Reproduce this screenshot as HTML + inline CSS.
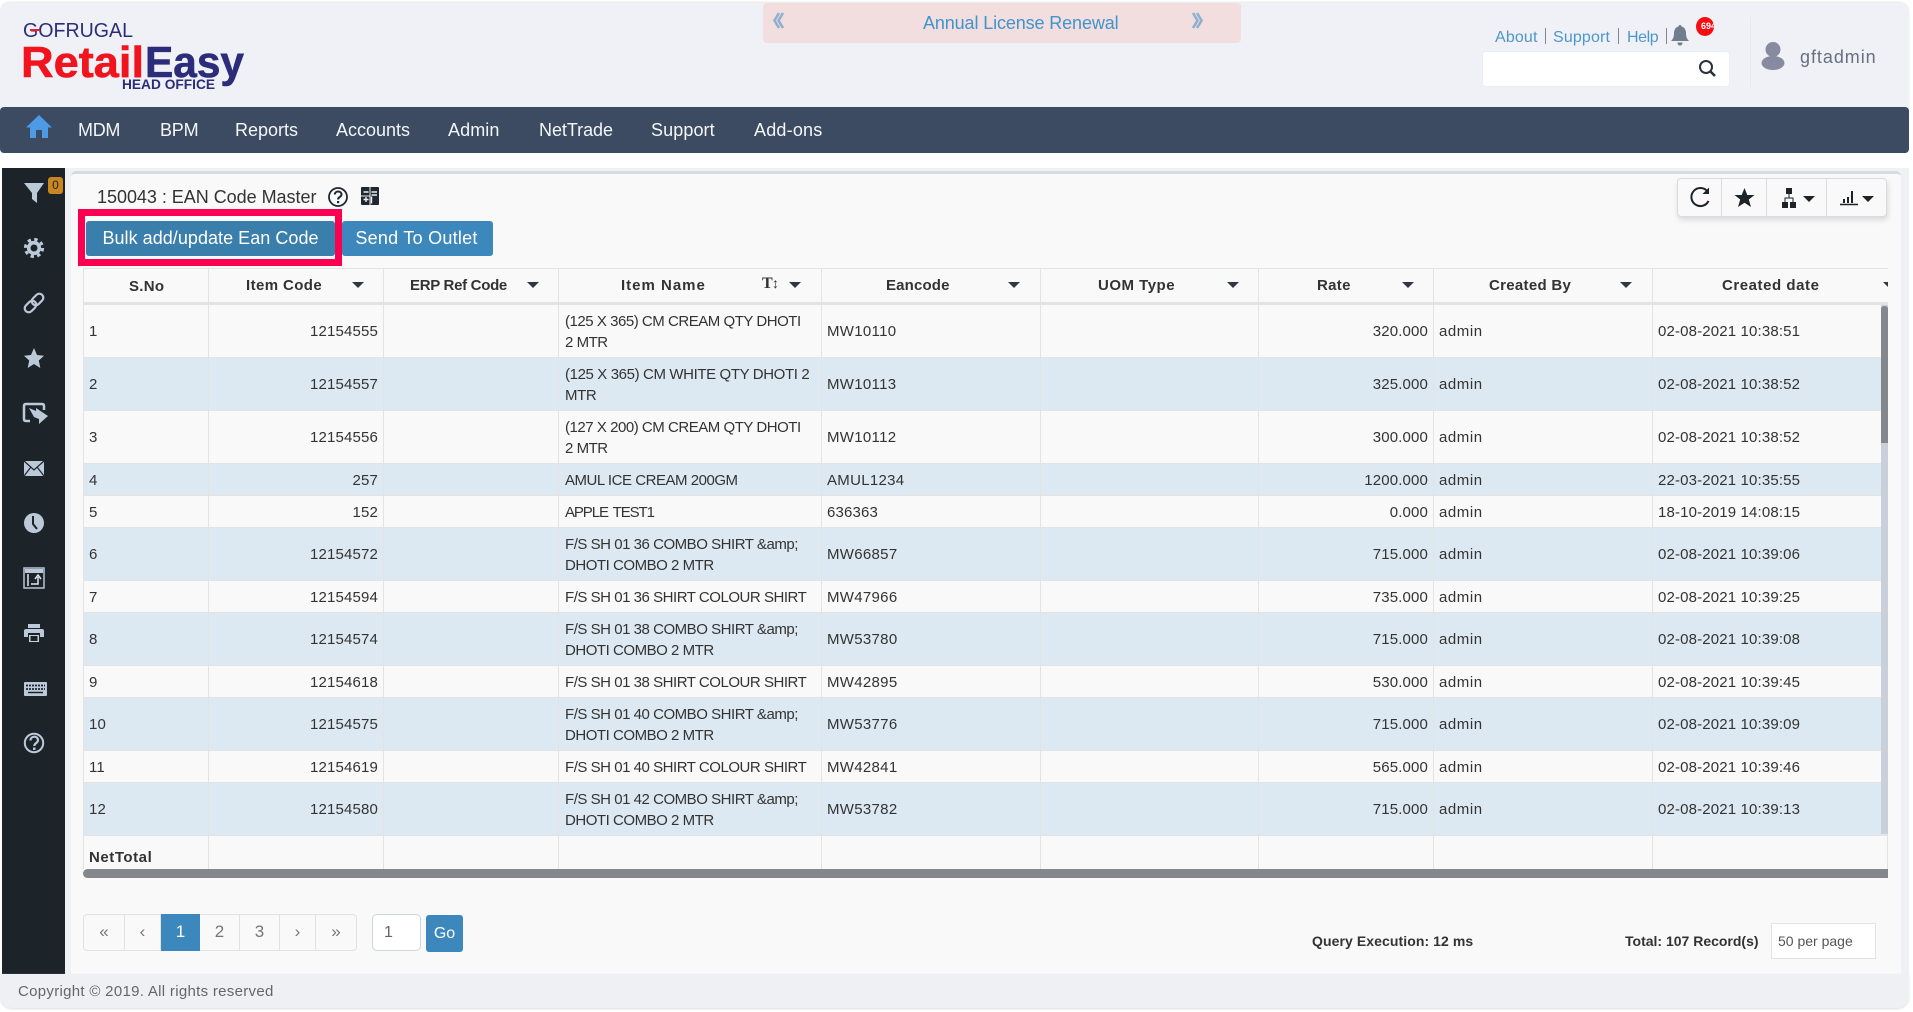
<!DOCTYPE html>
<html><head><meta charset="utf-8"><title>EAN Code Master</title>
<style>
*{box-sizing:border-box}
html,body{margin:0;padding:0;background:#fff;width:1913px;height:1012px;overflow:hidden;font-family:"Liberation Sans",Arial,sans-serif;color:#333}
.a{position:absolute;white-space:nowrap;display:block}
svg{position:absolute;overflow:visible}
#hdr{left:0;top:3px;width:1909px;height:110px;background:#f0f1f6;border-radius:10px 10px 0 0;box-shadow:0 -1px 2px #e6e6e6}
#nav{left:0;top:107px;width:1909px;height:46px;background:#3c4b61;border-radius:4px}
.n{top:118px;line-height:24px;font-size:18px;color:#f4f6f8}
#side{left:2px;top:168px;width:63px;height:806px;background:#1c2429}
#strip{left:65px;top:168px;width:1844px;height:806px;background:#eff1f5}
#panel{left:71px;top:171px;width:1830px;height:803px;background:#f9f9f9;border-top:3px solid #d5dbe1;border-radius:5px 5px 0 0}
#foot{left:0;top:974px;width:1909px;height:34px;background:#eff0f4;border-radius:0 0 12px 12px;box-shadow:0 1px 2px #ddd}
.btn{color:#fff;font-size:18px;line-height:35px;text-align:center;border-radius:3px}
table{border-collapse:separate;border-spacing:0;table-layout:fixed;width:1805px;font-size:15px;line-height:21px;color:#333}
td{border-right:1px solid #e3e3e3;border-bottom:1px solid #e3e3e3;padding:1px 5px 0 6px;vertical-align:middle;letter-spacing:.15px;overflow:hidden;white-space:nowrap}
td:first-child{border-left:1px solid #e3e3e3;padding-left:5px}
td:last-child{padding-left:5px}
tr.e td{background:#dde9f2}
tr.o td{background:#f9f9f9}
.r{text-align:right}
.u{letter-spacing:-.47px}
td.m{letter-spacing:.3px;padding-left:5px}
td.ad{letter-spacing:.55px;padding-left:5px}
.th{top:275px;line-height:22px;font-size:15px;font-weight:bold;letter-spacing:.3px;color:#333}
.tr{position:absolute;top:282px;width:0;height:0;border-left:6px solid transparent;border-right:6px solid transparent;border-top:6px solid #2f3744}
.pg{position:absolute;top:914px;height:37px;border:1px solid #e2e2e2;border-left:0;background:#f9f9f9;color:#777;font-size:17px;line-height:34px;text-align:center}
.lk{top:27px;line-height:22px;font-size:16px;color:#4d97cf;letter-spacing:.15px}
.sp{position:absolute;top:28px;width:1px;height:16px;background:#7d8794}
</style></head><body>

<div class="a" id="hdr"></div>
<div class="a" id="strip"></div>
<div class="a" id="panel"></div>

<!-- Logo -->
<svg style="left:0;top:0" width="260" height="100">
<text x="23" y="37" font-size="20" textLength="110" lengthAdjust="spacingAndGlyphs" fill="#2b2d7a" font-family="Liberation Sans">GOFRUGAL</text>
<rect x="30" y="29" width="10" height="2" fill="#ee1c25"/>
<text x="21" y="77" font-size="44" font-weight="bold" textLength="123" lengthAdjust="spacingAndGlyphs" fill="#f0141e" stroke="#f0141e" stroke-width=".6" font-family="Liberation Sans">Retail</text>
<text x="145" y="77" font-size="44" font-weight="bold" textLength="99" lengthAdjust="spacingAndGlyphs" fill="#2b2d7a" stroke="#2b2d7a" stroke-width=".6" font-family="Liberation Sans">Easy</text>
<text x="122" y="89" font-size="14" font-weight="bold" textLength="93" lengthAdjust="spacingAndGlyphs" fill="#2b2d7a" font-family="Liberation Sans">HEAD OFFICE</text>
</svg>

<!-- Banner -->
<div class="a" style="left:763px;top:3px;width:478px;height:40px;background:#f2dede;border-radius:4px"></div>
<span class="a" style="left:923px;top:11px;line-height:24px;font-size:18px;color:#4094cc;letter-spacing:-.12px">Annual License Renewal</span>
<svg style="left:773px;top:12px" width="14" height="18"><path d="M6 1L1.500 8.500L6 16M10 1L5.500 8.500L10 16" fill="none" stroke="#8fb0d0" stroke-width="2.600"/></svg>
<svg style="left:1190px;top:12px" width="14" height="18"><path d="M3 1L7.500 8.500L3 16M7 1L11.500 8.500L7 16" fill="none" stroke="#8fb0d0" stroke-width="2.600"/></svg>

<!-- Top right -->
<span class="a lk" style="left:1495px">About</span><i class="sp" style="left:1545px"></i>
<span class="a lk" style="left:1553px">Support</span><i class="sp" style="left:1618px"></i>
<span class="a lk" style="left:1627px;letter-spacing:-.4px">Help</span><i class="sp" style="left:1666px"></i>
<svg style="left:1671px;top:25px" width="18" height="21"><path d="M9 0c1 0 1.500.7 1.500 1.500C13.500 2.300 15 5 15 8c0 4 1 6 3 8H0c2-2 3-4 3-8 0-3 1.500-5.700 4.500-6.500C7.500.7 8 0 9 0zM6.500 17.500h5C11.500 19.500 10.500 20.500 9 20.500s-2.500-1-2.500-3z" fill="#6f7d8e"/></svg>
<div class="a" style="left:1696px;top:17px;width:18px;height:19px;border-radius:50%;background:#f60d12;overflow:hidden;color:#fff;font-size:9px;font-weight:bold;line-height:19px;padding-left:5px">694</div>
<div class="a" style="left:1482px;top:51px;width:248px;height:36px;background:#fff;border-radius:4px;border:1px solid #eceef2"></div>
<svg style="left:1698px;top:59px" width="20" height="20"><circle cx="8" cy="8" r="6" fill="none" stroke="#28323e" stroke-width="2"/><path d="M12.500 12.500L17 17" stroke="#28323e" stroke-width="2.600"/></svg>
<div class="a" style="left:1750px;top:17px;width:1px;height:70px;background:#e8e9ee"></div>
<svg style="left:1761px;top:42px" width="24" height="28"><circle cx="12" cy="7.500" r="7.500" fill="#868b9f"/><ellipse cx="12" cy="21" rx="11.500" ry="7" fill="#868b9f"/></svg>
<span class="a" style="left:1800px;top:45px;line-height:24px;font-size:18px;color:#667080;letter-spacing:.95px">gftadmin</span>

<!-- Nav -->
<div class="a" id="nav"></div>
<svg style="left:26px;top:115px" width="26" height="23"><path d="M13 0L26 12.500H22V23H16V15H10V23H4V12.500H0z" fill="#4d9be6"/></svg>
<span class="a n" style="left:78px;letter-spacing:-.3px">MDM</span>
<span class="a n" style="left:160px;letter-spacing:-.2px">BPM</span>
<span class="a n" style="left:235px">Reports</span>
<span class="a n" style="left:336px">Accounts</span>
<span class="a n" style="left:448px;letter-spacing:.1px">Admin</span>
<span class="a n" style="left:539px;letter-spacing:-.05px">NetTrade</span>
<span class="a n" style="left:651px;letter-spacing:.1px">Support</span>
<span class="a n" style="left:754px;letter-spacing:.2px">Add-ons</span>

<!-- Sidebar -->
<div class="a" id="side"></div>
<div class="a" style="left:48px;top:177px;width:15px;height:17px;background:#c9851f;border-radius:3px;color:#1c2429;font-size:12px;line-height:17px;text-align:center">0</div>
<svg style="left:0;top:0" width="70" height="770" fill="#bcc9d9">
<path d="M24 183H44L37 193V203L32 199V193Z"/>
<circle cx="34" cy="248" r="5.300" fill="none" stroke="#bcc9d9" stroke-width="3.600"/>
<circle cx="34" cy="248" r="8.600" fill="none" stroke="#bcc9d9" stroke-width="3" stroke-dasharray="3.400 3.350"/>
<g fill="none" stroke="#bcc9d9" stroke-width="2.200" transform="rotate(-45 34 303)"><rect x="22.500" y="299" width="13" height="8" rx="4"/><rect x="32.500" y="299" width="13" height="8" rx="4"/></g>
<path d="M34 348L37 355L44 355.800L38.800 360.500L40.300 368L34 364L27.700 368L29.200 360.500L24 355.800L31 355Z"/>
<path d="M26 404H42Q44 404 44 406V410M30 421H26Q24 421 24 419V406Q24 404 26 404" fill="none" stroke="#bcc9d9" stroke-width="2.500"/>
<path d="M29 408L36 411V408L48 416L39 424V419L34 417Z"/>
<rect x="24" y="461" width="20" height="15"/><path d="M24 461L34 470L44 461M24 476L31 467M44 476L37 467" fill="none" stroke="#1c2429" stroke-width="1.200"/>
<circle cx="34" cy="523" r="10"/><path d="M33 516V524L37 529" fill="none" stroke="#1c2429" stroke-width="2"/>
<rect x="24" y="568" width="20" height="20" fill="none" stroke="#b6c4d6" stroke-width="1.500"/><rect x="25" y="569" width="18" height="4"/><path d="M28 574V586M31 584H38V577M35 579L38 575L41 579" fill="none" stroke="#dfe6ee" stroke-width="1.500"/>
<path d="M28 624H40V628H28ZM26 629H42Q44 629 44 631V637H40V633H28V637H24V631Q24 629 26 629Z"/><rect x="29" y="635" width="10" height="7" fill="#c6d2e0"/><rect x="30.500" y="636" width="7" height="5" fill="#1c2429"/>
<rect x="24" y="682" width="23" height="14" rx="1"/><path d="M26 685.500H45M26 689H45" stroke="#1c2429" stroke-width="1.800" stroke-dasharray="2 1"/><path d="M28 692.500H43" stroke="#1c2429" stroke-width="1.500"/>
<circle cx="34" cy="743" r="9.200" fill="none" stroke="#bcc9d9" stroke-width="2"/>
<path d="M30.500 740.500C30.500 735.500 38 735.500 38 740.200C38 743 34.300 743 34.300 746" fill="none" stroke="#bcc9d9" stroke-width="2.200"/><rect x="33" y="747.500" width="2.500" height="2.500"/>
</svg>

<!-- Title -->
<span class="a" style="left:97px;top:185px;line-height:24px;font-size:18px;color:#333;letter-spacing:-.03px">150043 : EAN Code Master</span>
<svg style="left:328px;top:187px" width="20" height="20"><circle cx="10" cy="10" r="9" fill="none" stroke="#1f2830" stroke-width="1.800"/><path d="M6.800 7.500C6.800 3.500 13.500 3.500 13.500 7.500C13.500 10 10 10 10 12.500" fill="none" stroke="#1f2830" stroke-width="2"/><rect x="9" y="14" width="2.200" height="2.200" fill="#1f2830"/></svg>
<svg style="left:361px;top:187px" width="18" height="18"><rect width="18" height="18" rx="1" fill="#1f2830"/><path d="M2.500 5H7.500M10.500 5H16M10.500 8H16M2.500 12.500H7.500M5 10V15M10.500 9.500V16.500" stroke="#eee" stroke-width="1.400"/><path d="M9 0V18M0 9H9" stroke="#eee" stroke-width="1"/></svg>

<!-- Buttons -->
<div class="a" style="left:78px;top:209px;width:264px;height:57px;border:7px solid #fb0050;background:#f9f9f9"></div>
<div class="a btn" style="left:86px;top:221px;width:249px;height:35px;background:#3a7eab;letter-spacing:.04px">Bulk add/update Ean Code</div>
<div class="a btn" style="left:342px;top:221px;width:151px;height:35px;background:#3c88bc;letter-spacing:.25px;padding-right:2px">Send To Outlet</div>

<!-- Toolbar -->
<div class="a" style="left:1677px;top:178px;width:210px;height:39px;background:#f9f9f9;border:1px solid #d8dbe0;border-radius:4px;box-shadow:1px 3px 6px rgba(0,0,0,.13)"></div>
<i class="a" style="left:1721px;top:179px;width:1px;height:37px;background:#d8dbe0"></i>
<i class="a" style="left:1766px;top:179px;width:1px;height:37px;background:#d8dbe0"></i>
<i class="a" style="left:1826px;top:179px;width:1px;height:37px;background:#d8dbe0"></i>
<svg style="left:0;top:0" width="1900" height="220" fill="#1c2429">
<path d="M1707.500 191.500A9 9 0 1 0 1708.500 201" fill="none" stroke="#1c2429" stroke-width="2"/><path d="M1709 187.500V194H1702.500Z"/>
<path d="M1744.500 188L1747.300 195H1754.500L1748.800 199.500L1751 207L1744.500 202.800L1738 207L1740.200 199.500L1734.500 195H1741.700Z"/>
<rect x="1786" y="188" width="6" height="6"/><rect x="1782" y="202" width="6" height="6"/><rect x="1790" y="202" width="6" height="6"/>
<path d="M1789 194V198M1785 202V198H1793V202" fill="none" stroke="#1c2429" stroke-width="1"/>
<path d="M1803 196H1815L1809 202Z"/>
<path d="M1840 204.500H1858" stroke="#1c2429" stroke-width="1.600"/><path d="M1843 199h2v4h-2zM1847 197h2v6h-2zM1851 191h2v12h-2z"/>
<path d="M1862 196H1874L1868 202Z"/>
</svg>

<!-- Table -->
<div class="a" style="left:83px;top:268px;width:1805px;height:37px;border-top:1px solid #e3e3e3;border-bottom:3px solid #e3e3e3;border-left:1px solid #e3e3e3;background:#f9f9f9"></div>
<div class="a" style="left:83px;top:305px;width:1805px;height:564px;overflow:hidden">
<table>
<colgroup><col style="width:126px"><col style="width:175px"><col style="width:175px"><col style="width:263px"><col style="width:219px"><col style="width:218px"><col style="width:175px"><col style="width:219px"><col style="width:235px"></colgroup>
<tr class="o" style="height:53px"><td>1</td><td class="r">12154555</td><td></td><td class="u">(125 X 365) CM CREAM QTY DHOTI<br>2 MTR</td><td class="m">MW10110</td><td></td><td class="r">320.000</td><td class="ad">admin</td><td>02-08-2021 10:38:51</td></tr>
<tr class="e" style="height:53px"><td>2</td><td class="r">12154557</td><td></td><td class="u" style="letter-spacing:-.38px">(125 X 365) CM WHITE QTY DHOTI 2<br>MTR</td><td class="m">MW10113</td><td></td><td class="r">325.000</td><td class="ad">admin</td><td>02-08-2021 10:38:52</td></tr>
<tr class="o" style="height:53px"><td>3</td><td class="r">12154556</td><td></td><td class="u">(127 X 200) CM CREAM QTY DHOTI<br>2 MTR</td><td class="m">MW10112</td><td></td><td class="r">300.000</td><td class="ad">admin</td><td>02-08-2021 10:38:52</td></tr>
<tr class="e" style="height:32px"><td>4</td><td class="r">257</td><td></td><td class="u">AMUL ICE CREAM 200GM</td><td class="m">AMUL1234</td><td></td><td class="r">1200.000</td><td class="ad">admin</td><td>22-03-2021 10:35:55</td></tr>
<tr class="o" style="height:32px"><td>5</td><td class="r">152</td><td></td><td class="u" style="letter-spacing:-1.1px;word-spacing:2px">APPLE TEST1</td><td style="padding-left:5px">636363</td><td></td><td class="r">0.000</td><td class="ad">admin</td><td>18-10-2019 14:08:15</td></tr>
<tr class="e" style="height:53px"><td>6</td><td class="r">12154572</td><td></td><td class="u">F/S SH 01 36 COMBO SHIRT &amp;amp;<br>DHOTI COMBO 2 MTR</td><td class="m">MW66857</td><td></td><td class="r">715.000</td><td class="ad">admin</td><td>02-08-2021 10:39:06</td></tr>
<tr class="o" style="height:32px"><td>7</td><td class="r">12154594</td><td></td><td class="u">F/S SH 01 36 SHIRT COLOUR SHIRT</td><td class="m">MW47966</td><td></td><td class="r">735.000</td><td class="ad">admin</td><td>02-08-2021 10:39:25</td></tr>
<tr class="e" style="height:53px"><td>8</td><td class="r">12154574</td><td></td><td class="u">F/S SH 01 38 COMBO SHIRT &amp;amp;<br>DHOTI COMBO 2 MTR</td><td class="m">MW53780</td><td></td><td class="r">715.000</td><td class="ad">admin</td><td>02-08-2021 10:39:08</td></tr>
<tr class="o" style="height:32px"><td>9</td><td class="r">12154618</td><td></td><td class="u">F/S SH 01 38 SHIRT COLOUR SHIRT</td><td class="m">MW42895</td><td></td><td class="r">530.000</td><td class="ad">admin</td><td>02-08-2021 10:39:45</td></tr>
<tr class="e" style="height:53px"><td>10</td><td class="r">12154575</td><td></td><td class="u">F/S SH 01 40 COMBO SHIRT &amp;amp;<br>DHOTI COMBO 2 MTR</td><td class="m">MW53776</td><td></td><td class="r">715.000</td><td class="ad">admin</td><td>02-08-2021 10:39:09</td></tr>
<tr class="o" style="height:32px"><td>11</td><td class="r">12154619</td><td></td><td class="u">F/S SH 01 40 SHIRT COLOUR SHIRT</td><td class="m">MW42841</td><td></td><td class="r">565.000</td><td class="ad">admin</td><td>02-08-2021 10:39:46</td></tr>
<tr class="e" style="height:53px"><td>12</td><td class="r">12154580</td><td></td><td class="u">F/S SH 01 42 COMBO SHIRT &amp;amp;<br>DHOTI COMBO 2 MTR</td><td class="m">MW53782</td><td></td><td class="r">715.000</td><td class="ad">admin</td><td>02-08-2021 10:39:13</td></tr>
<tr class="o" style="height:34px"><td style="font-weight:bold;letter-spacing:.55px;padding-top:8px;border-bottom:0">NetTotal</td><td style="border-bottom:0"></td><td style="border-bottom:0"></td><td style="border-bottom:0"></td><td style="border-bottom:0"></td><td style="border-bottom:0"></td><td style="border-bottom:0"></td><td style="border-bottom:0"></td><td style="border-bottom:0"></td></tr>
</table>
</div>

<!-- Header cells -->
<div class="a" style="left:84px;top:268px;width:1804px;height:37px;overflow:hidden">
<i class="a" style="left:124px;top:0;width:1px;height:36px;background:#e3e3e3"></i>
<i class="a" style="left:299px;top:0;width:1px;height:36px;background:#e3e3e3"></i>
<i class="a" style="left:474px;top:0;width:1px;height:36px;background:#e3e3e3"></i>
<i class="a" style="left:737px;top:0;width:1px;height:36px;background:#e3e3e3"></i>
<i class="a" style="left:956px;top:0;width:1px;height:36px;background:#e3e3e3"></i>
<i class="a" style="left:1174px;top:0;width:1px;height:36px;background:#e3e3e3"></i>
<i class="a" style="left:1349px;top:0;width:1px;height:36px;background:#e3e3e3"></i>
<i class="a" style="left:1568px;top:0;width:1px;height:36px;background:#e3e3e3"></i>
<i class="tr" style="left:1799px;top:14px"></i>
</div>
<span class="a th" style="left:129px;top:276px">S.No</span>
<span class="a th" style="left:246px;letter-spacing:.4px">Item Code</span><i class="tr" style="left:352px"></i>
<span class="a th" style="left:410px;letter-spacing:-.3px">ERP Ref Code</span><i class="tr" style="left:527px"></i>
<span class="a th" style="left:621px;letter-spacing:1px">Item Name</span>
<span class="a" style="left:762px;top:273px;font:bold 16px/22px 'Liberation Serif',serif;color:#333">T</span><span class="a" style="left:772px;top:272px;font-size:14px;line-height:22px;color:#333">↕</span><i class="tr" style="left:789px"></i>
<span class="a th" style="left:886px;letter-spacing:.15px">Eancode</span><i class="tr" style="left:1008px"></i>
<span class="a th" style="left:1098px;letter-spacing:.5px">UOM Type</span><i class="tr" style="left:1227px"></i>
<span class="a th" style="left:1317px">Rate</span><i class="tr" style="left:1402px"></i>
<span class="a th" style="left:1489px">Created By</span><i class="tr" style="left:1620px"></i>
<span class="a th" style="left:1722px;letter-spacing:.55px">Created date</span>

<!-- Scrollbars -->
<div class="a" style="left:1881px;top:305px;width:7px;height:529px;background:#c9d0d9"></div>
<div class="a" style="left:1881px;top:306px;width:7px;height:137px;background:#84888c;border-radius:3px 3px 0 0"></div>
<div class="a" style="left:83px;top:869px;width:1805px;height:9px;background:#84888c;border-radius:5px 0 0 5px"></div>

<!-- Pagination -->
<div class="pg" style="left:83px;width:42px;border-left:1px solid #e2e2e2;border-radius:4px 0 0 4px">«</div>
<div class="pg" style="left:125px;width:36px">‹</div>
<div class="pg" style="left:161px;width:39px;background:#3c88bc;border-color:#3c88bc;color:#fff;padding-left:1px">1</div>
<div class="pg" style="left:200px;width:40px">2</div>
<div class="pg" style="left:240px;width:40px">3</div>
<div class="pg" style="left:280px;width:36px">›</div>
<div class="pg" style="left:316px;width:41px;border-radius:0 4px 4px 0">»</div>
<div class="a" style="left:372px;top:914px;width:49px;height:37px;background:#fff;border:1px solid #cfd5dc;border-radius:5px;color:#666;font-size:16px;line-height:36px;padding-left:11px">1</div>
<div class="a" style="left:426px;top:915px;width:37px;height:37px;background:#3c88bc;border-radius:3px;color:#fff;font-size:16px;line-height:37px;text-align:center">Go</div>

<span class="a" style="left:1312px;top:930px;line-height:22px;font-size:14px;font-weight:bold;color:#333;letter-spacing:.08px">Query Execution: 12 ms</span>
<span class="a" style="left:1625px;top:930px;line-height:22px;font-size:14px;font-weight:bold;color:#333;letter-spacing:0">Total: 107 Record(s)</span>
<div class="a" style="left:1771px;top:923px;width:105px;height:36px;background:#fff;border:1px solid #e4e4e4;color:#555;font-size:14px;line-height:34px;padding-left:6px">50 per page</div>

<!-- Footer -->
<div class="a" id="foot"></div>
<span class="a" style="left:18px;top:981px;line-height:22px;font-size:15px;color:#666;letter-spacing:.3px">Copyright © 2019. All rights reserved</span>
</body></html>
